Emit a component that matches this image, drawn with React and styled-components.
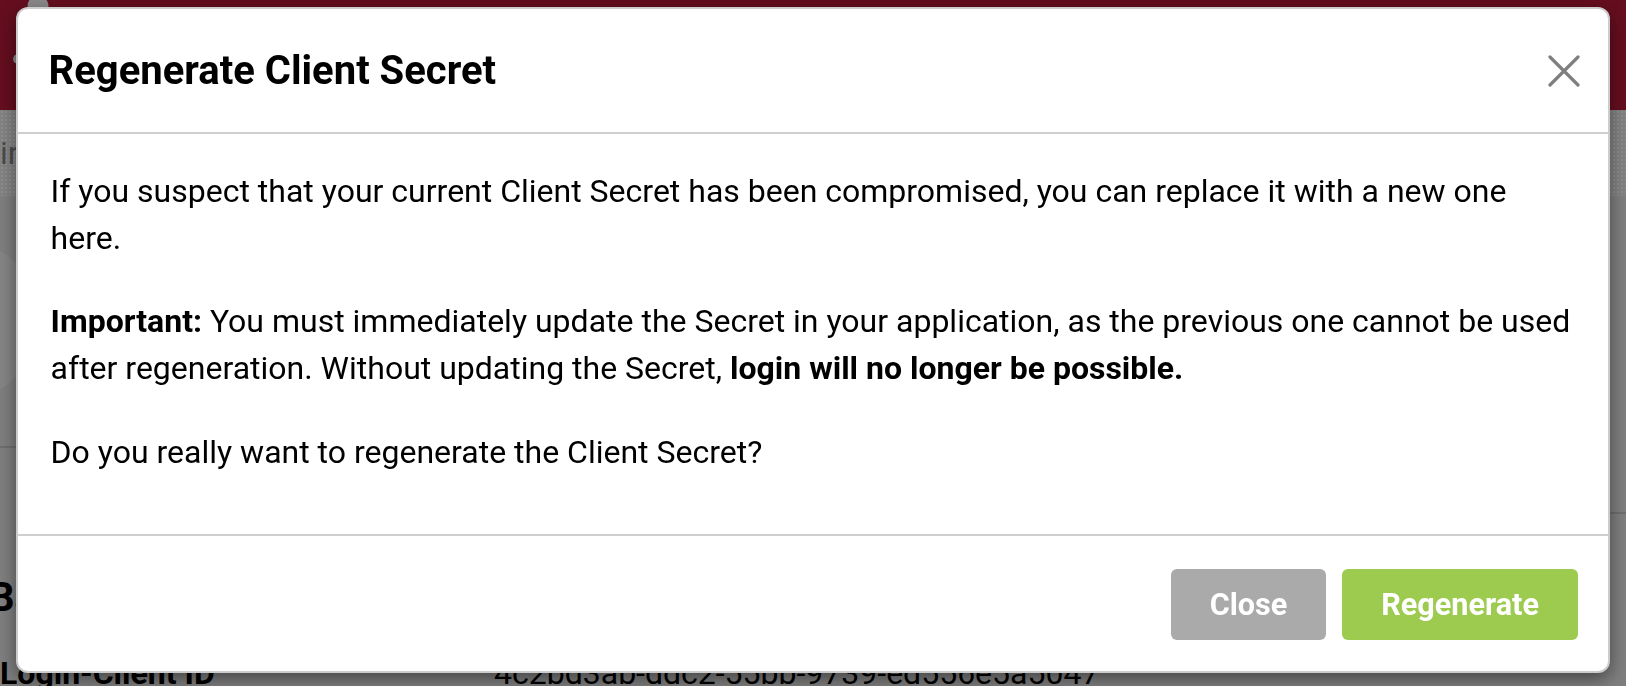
import React from "react";
import styled, { createGlobalStyle } from "styled-components";

const Global = createGlobalStyle`
  *, *::before, *::after { box-sizing: border-box; }
  html, body { margin: 0; padding: 0; }
  body {
    width: 1626px;
    height: 686px;
    overflow: hidden;
    background: #7f7f7f;
    font-family: Roboto, "Liberation Sans", Arial, sans-serif;
  }
`;

/* ---------- dimmed page behind the modal ---------- */

const Page = styled.div`
  display: flex;
  flex-direction: column;
  height: 686px;
  overflow: hidden;
`;

const TopBar = styled.header`
  flex-shrink: 0;
  height: 110px;
  background: #650e1f;
  display: flex;
  align-items: flex-start;
`;

const SubBar = styled.nav`
  flex-shrink: 0;
  height: 86px;
  display: flex;
  align-items: center;
  background-color: #838383;
  background-image: radial-gradient(circle, rgba(255, 255, 255, 0.09) 1px, transparent 1.3px);
  background-size: 4px 4px;
`;

const Crumb = styled.span`
  font-size: 32px;
  color: #4b4b4b;
  white-space: nowrap;
`;

const Content = styled.main`
  display: flex;
  flex-direction: column;
`;

const Avatar = styled.div`
  flex-shrink: 0;
  width: 160px;
  height: 160px;
  margin: 44px 0 0 -120px;
  border-radius: 50%;
  background: #858585;
`;

const Rule = styled.div`
  flex-shrink: 0;
  width: 40px;
  height: 2px;
  background: #6f6f6f;
  margin-top: ${(p) => p.$gap}px;
  align-self: ${(p) => (p.$end ? "flex-end" : "flex-start")};
`;

const SectionTitle = styled.h3`
  margin: 60px 0 0 -11px;
  font-size: 40px;
  font-weight: 700;
  line-height: 1.2;
  color: #000;
  white-space: nowrap;
`;

const DataRow = styled.div`
  display: grid;
  grid-template-columns: 494px 1fr;
  margin-top: 28px;
  font-size: 32px;
  line-height: 46.6px;
  color: #000;
  white-space: nowrap;
`;

const DataLabel = styled.span`
  font-weight: 700;
`;

const DataValue = styled.span`
  font-weight: 400;
`;

/* ---------- modal ---------- */

const Backdrop = styled.div`
  position: fixed;
  inset: 0;
  display: flex;
  justify-content: center;
  align-items: flex-start;
  padding-top: 7px;
`;

const Dialog = styled.div`
  width: 1594px;
  display: flex;
  flex-direction: column;
  background: #fff;
  border: 2px solid rgba(0, 0, 0, 0.2);
  border-radius: 12px;
  box-shadow: 0 6px 18px rgba(0, 0, 0, 0.45);
`;

const Header = styled.div`
  display: flex;
  align-items: center;
  justify-content: space-between;
  padding: 32.6px 28px 32.6px 30.6px;
  border-bottom: 2px solid #cfcfcf;
`;

const Title = styled.h4`
  margin: 0;
  font-size: 40px;
  font-weight: 700;
  line-height: 58.2px;
  color: #000;
`;

const CloseX = styled.button`
  display: flex;
  align-items: center;
  justify-content: center;
  width: 32px;
  height: 32px;
  padding: 0;
  border: 0;
  background: none;
  cursor: pointer;
`;

const Body = styled.div`
  padding: 33.6px 32.6px 22px;
  font-size: 32px;
  line-height: 46.6px;
  color: #000;
`;

const Para = styled.p`
  margin: 0 0 37.1px;
`;

const Footer = styled.div`
  display: flex;
  justify-content: flex-end;
  gap: 16px;
  padding: 33px 30px 31px;
  border-top: 2px solid #cfcfcf;
`;

const Button = styled.button`
  height: 71px;
  padding: 0 39px;
  border: 0;
  border-radius: 6px;
  font-family: inherit;
  font-size: 30.6px;
  font-weight: 700;
  color: #fff;
  background: ${(p) => (p.$primary ? "#9ccb4f" : "#aaaaaa")};
  cursor: pointer;
`;

export default function App() {
  return (
    <>
      <Global />
      <Page>
        <TopBar>
          <svg width="60" height="110" viewBox="0 0 60 110" aria-hidden="true">
            <circle cx="38" cy="6" r="10.5" fill="#8a8a8a" />
            <circle cx="18" cy="59" r="5" fill="#8a8a8a" />
          </svg>
        </TopBar>
        <SubBar>
          <Crumb>ir</Crumb>
        </SubBar>
        <Content>
          <Avatar />
          <Rule $gap={46} />
          <Rule $gap={64} $end />
          <SectionTitle>Basisdaten</SectionTitle>
          <DataRow>
            <DataLabel>Login-Client ID</DataLabel>
            <DataValue>4c2bd3ab-ddc2-55bb-9739-ed556e5a5047</DataValue>
          </DataRow>
        </Content>
      </Page>

      <Backdrop>
        <Dialog role="dialog" aria-modal="true">
          <Header>
            <Title>Regenerate Client Secret</Title>
            <CloseX aria-label="Close">
              <svg width="32" height="32" viewBox="0 0 32 32">
                <path
                  d="M2 2 L30 30 M30 2 L2 30"
                  stroke="#7f7f7f"
                  strokeWidth="3.2"
                  strokeLinecap="round"
                  fill="none"
                />
              </svg>
            </CloseX>
          </Header>
          <Body>
            <Para>
              If you suspect that your current Client Secret has been compromised, you can
              replace it with a new one here.
            </Para>
            <Para>
              <strong>Important:</strong> You must immediately update the Secret in your
              application, as the previous one cannot be used after regeneration. Without
              updating the Secret, <strong>login will no longer be possible.</strong>
            </Para>
            <Para>Do you really want to regenerate the Client Secret?</Para>
          </Body>
          <Footer>
            <Button>Close</Button>
            <Button $primary>Regenerate</Button>
          </Footer>
        </Dialog>
      </Backdrop>
    </>
  );
}
